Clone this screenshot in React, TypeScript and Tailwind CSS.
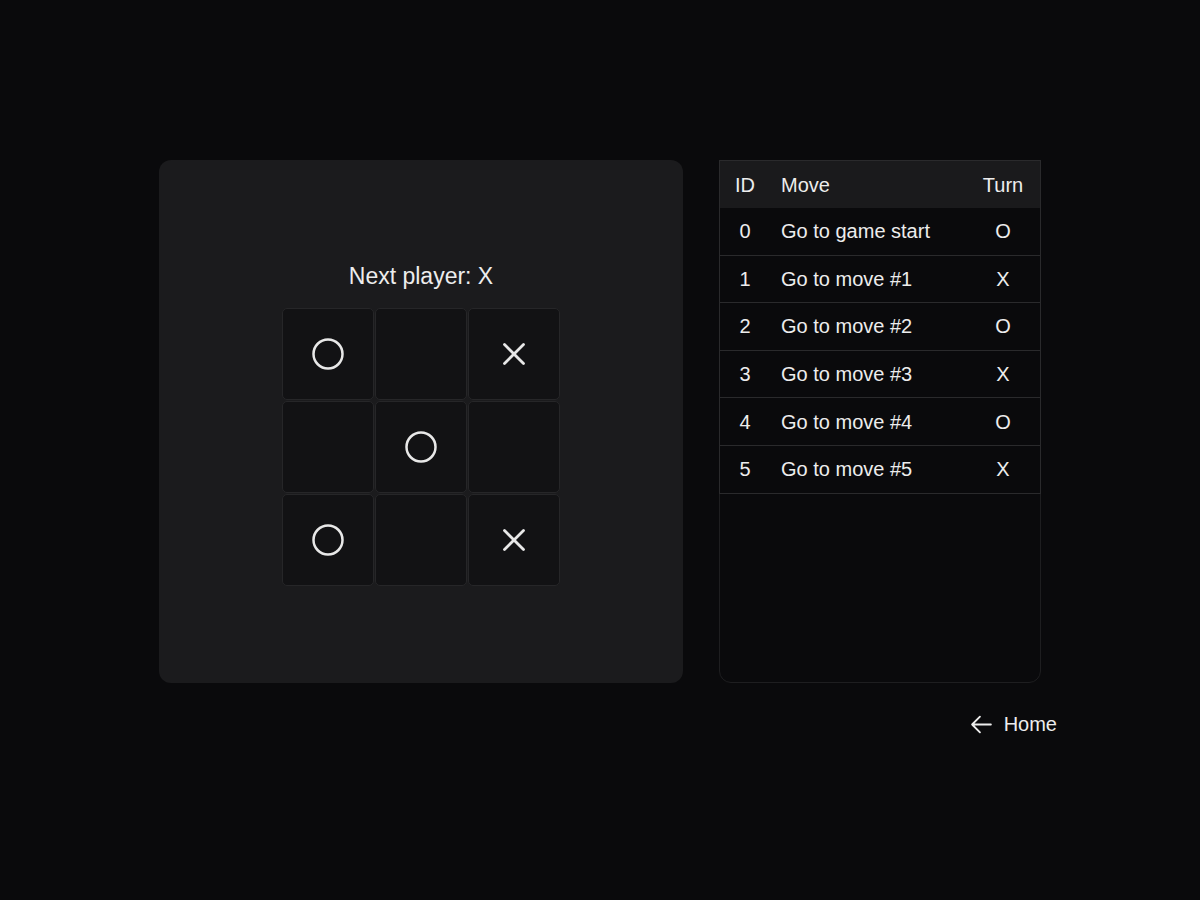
import React from "react";

type Mark = "X" | "O" | null;

const board: Mark[] = ["O", null, "X", null, "O", null, "O", null, "X"];

const moves = [
  { id: 0, label: "Go to game start", turn: "O" },
  { id: 1, label: "Go to move #1", turn: "X" },
  { id: 2, label: "Go to move #2", turn: "O" },
  { id: 3, label: "Go to move #3", turn: "X" },
  { id: 4, label: "Go to move #4", turn: "O" },
  { id: 5, label: "Go to move #5", turn: "X" },
];

const MarkIcon = ({ mark }: { mark: Mark }) => {
  if (mark === "O") {
    return (
      <svg width="34" height="34" viewBox="0 0 34 34">
        <circle cx="17" cy="17" r="14.5" fill="none" stroke="#e8e8e8" strokeWidth="2.5" />
      </svg>
    );
  }
  if (mark === "X") {
    return (
      <svg width="24" height="24" viewBox="0 0 24 24">
        <path d="M2.5 2.5 21.5 21.5M21.5 2.5 2.5 21.5" stroke="#e8e8e8" strokeWidth="2.8" strokeLinecap="round" />
      </svg>
    );
  }
  return null;
};

const Square = ({ mark }: { mark: Mark }) => (
  <button className="w-[92px] h-[92px] flex items-center justify-center bg-[#121214] border border-[#262628] rounded-[5px]">
    <MarkIcon mark={mark} />
  </button>
);

export default function App() {
  return (
    <div
      className="min-h-screen w-full bg-[#0a0a0c] text-[#ededed] flex items-center justify-center pb-[2px]"
      style={{ fontFamily: '"Liberation Sans", Arial, sans-serif' }}
    >
      <div className="flex flex-col">
        <div className="flex gap-[36px]">
          <div className="w-[524px] h-[523px] bg-[#1b1b1d] rounded-[12px] flex flex-col items-center justify-center pt-[2px]">
            <div className="text-[23px] leading-[32px] mb-[16px]">Next player: X</div>
            <div className="grid grid-cols-3 gap-px">
              {board.map((m, i) => (
                <Square key={i} mark={m} />
              ))}
            </div>
          </div>

          <div className="w-[322px] h-[523px] border border-[#1e1e20] rounded-b-[12px] bg-[#0a0a0c]">
            <div className="-mx-px -mt-px">
              <div className="grid grid-cols-[50px_1fr_74px] h-[48px] items-center bg-[#1a1a1c] border border-b-0 border-[#2a2a2c] text-[20px]">
                <div className="text-center">ID</div>
                <div className="pl-[11px]">Move</div>
                <div className="text-center">Turn</div>
              </div>
              {moves.map((m) => (
                <div
                  key={m.id}
                  className="grid grid-cols-[50px_1fr_74px] h-[47.6px] items-center border-x border-b border-[#2a2a2c] text-[20px]"
                >
                  <div className="text-center">{m.id}</div>
                  <div className="pl-[11px]">{m.label}</div>
                  <div className="text-center">{m.turn}</div>
                </div>
              ))}
            </div>
          </div>
        </div>

        <div className="flex justify-end mt-[27px] -mr-[16px]">
          <a className="flex items-center gap-[10px] text-[20px] leading-[28px] cursor-pointer">
            <svg width="25" height="25" viewBox="0 0 24 24" fill="none" stroke="#ededed" strokeWidth="1.8" strokeLinecap="round" strokeLinejoin="round">
              <path d="M10.5 19.5 3 12m0 0 7.5-7.5M3 12h18" />
            </svg>
            <span>Home</span>
          </a>
        </div>
      </div>
    </div>
  );
}
